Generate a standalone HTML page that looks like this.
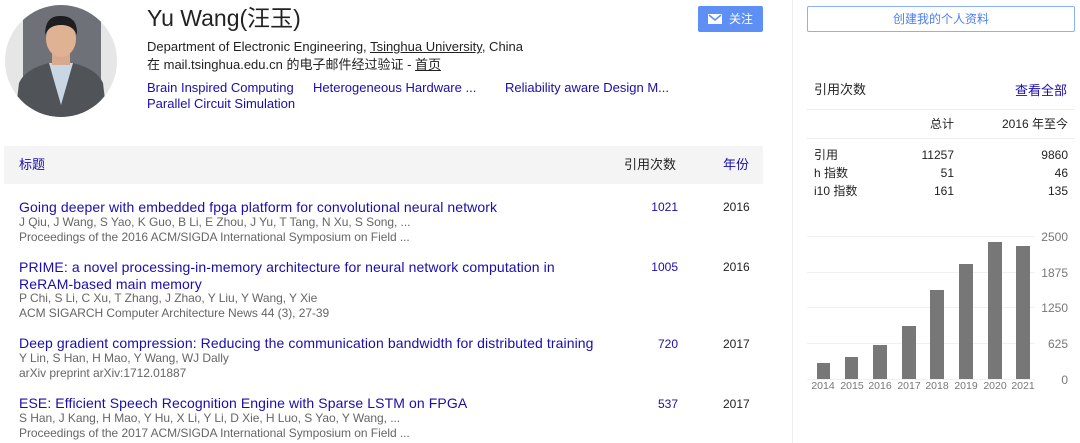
<!DOCTYPE html>
<html><head><meta charset="utf-8"><style>
*{margin:0;padding:0;box-sizing:border-box}
body{width:1080px;height:443px;background:#fff;font-family:"Liberation Sans","Noto Sans CJK SC",sans-serif;position:relative;overflow:hidden;color:#222}
.a{position:absolute;white-space:nowrap;line-height:1}
.t{font-size:14px;color:#1a0dab;letter-spacing:0.1px}
.au{font-size:12px;color:#666;letter-spacing:-0.05px}
.v{font-size:12px;color:#666;letter-spacing:-0.05px}
.c{font-size:12px;color:#1a0dab;text-align:right;width:60px}
.y{font-size:12px;color:#222}
.r{text-align:right}
</style></head><body>
<svg class="a" style="left:5px;top:5px" width="112" height="112" viewBox="0 0 112 112">
<defs><clipPath id="cp"><circle cx="56" cy="56" r="56"/></clipPath></defs>
<g clip-path="url(#cp)">
<rect width="112" height="112" fill="#e6e6e6"/>
<rect x="18" y="0" width="78" height="112" fill="#6e7178"/>
<path d="M10 112 L14 78 Q20 64 44 58 L68 58 Q92 64 98 78 L102 112Z" fill="#505358"/>
<path d="M44 58 L56 100 L68 58Z" fill="#c9d6e4"/>
<rect x="47" y="44" width="18" height="16" fill="#d8a98c"/>
<ellipse cx="56" cy="34" rx="15" ry="18" fill="#e0b294"/>
<path d="M40 30 Q40 10 56 11 Q73 11 72 30 Q68 20 56 20 Q44 20 40 30Z" fill="#1e1e20"/>
</g></svg>
<div class="a" style="left:147px;top:7px;font-size:23px;color:#222">Yu Wang(汪玉)</div>
<div class="a" style="left:147px;top:40px;font-size:13px;color:#222">Department of Electronic Engineering, <u>Tsinghua University</u>, China</div>
<div class="a" style="left:147px;top:58px;font-size:13px;color:#222">在 mail.tsinghua.edu.cn 的电子邮件经过验证 - <u>首页</u></div>
<div class="a" style="left:147px;top:81px;font-size:13px;color:#1a0dab">Brain Inspired Computing</div>
<div class="a" style="left:313px;top:81px;font-size:13px;color:#1a0dab">Heterogeneous Hardware ...</div>
<div class="a" style="left:505px;top:81px;font-size:13px;color:#1a0dab">Reliability aware Design M...</div>
<div class="a" style="left:147px;top:97px;font-size:13px;color:#1a0dab">Parallel Circuit Simulation</div>
<div class="a" style="left:698px;top:6px;width:65px;height:26px;background:#5d8ff5;border-radius:2px"></div>
<svg class="a" style="left:708px;top:14px" width="14" height="10" viewBox="0 0 14 10"><rect width="14" height="10" fill="#fff"/><path d="M1 1 L7 6 L13 1" stroke="#5d8ff5" stroke-width="1.5" fill="none"/></svg>
<div class="a" style="left:729px;top:13px;font-size:12px;color:#fff">关注</div>
<div class="a" style="left:4px;top:146px;width:759px;height:38px;background:#f4f4f4"></div>
<div class="a" style="left:19px;top:158px;font-size:13px;color:#1a0dab">标题</div>
<div class="a" style="left:624px;top:158px;font-size:13px;color:#222">引用次数</div>
<div class="a" style="left:723px;top:158px;font-size:13px;color:#1a0dab">年份</div>

<div class="a t" style="left:19px;top:200px">Going deeper with embedded fpga platform for convolutional neural network</div>
<div class="a au" style="left:19px;top:216px">J Qiu, J Wang, S Yao, K Guo, B Li, E Zhou, J Yu, T Tang, N Xu, S Song, ...</div>
<div class="a v" style="left:19px;top:231px">Proceedings of the 2016 ACM/SIGDA International Symposium on Field ...</div>
<div class="a c" style="left:618px;top:201px">1021</div><div class="a y" style="left:723px;top:201px">2016</div>

<div class="a t" style="left:19px;top:260px">PRIME: a novel processing-in-memory architecture for neural network computation in</div>
<div class="a t" style="left:19px;top:277px">ReRAM-based main memory</div>
<div class="a au" style="left:19px;top:292px">P Chi, S Li, C Xu, T Zhang, J Zhao, Y Liu, Y Wang, Y Xie</div>
<div class="a v" style="left:19px;top:307px">ACM SIGARCH Computer Architecture News 44 (3), 27-39</div>
<div class="a c" style="left:618px;top:261px">1005</div><div class="a y" style="left:723px;top:261px">2016</div>

<div class="a t" style="left:19px;top:336px">Deep gradient compression: Reducing the communication bandwidth for distributed training</div>
<div class="a au" style="left:19px;top:352px">Y Lin, S Han, H Mao, Y Wang, WJ Dally</div>
<div class="a v" style="left:19px;top:367px">arXiv preprint arXiv:1712.01887</div>
<div class="a c" style="left:618px;top:338px">720</div><div class="a y" style="left:723px;top:338px">2017</div>

<div class="a t" style="left:19px;top:396px">ESE: Efficient Speech Recognition Engine with Sparse LSTM on FPGA</div>
<div class="a au" style="left:19px;top:412px">S Han, J Kang, H Mao, Y Hu, X Li, Y Li, D Xie, H Luo, S Yao, Y Wang, ...</div>
<div class="a v" style="left:19px;top:427px">Proceedings of the 2017 ACM/SIGDA International Symposium on Field ...</div>
<div class="a c" style="left:618px;top:398px">537</div><div class="a y" style="left:723px;top:398px">2017</div>

<div class="a" style="left:792px;top:0;width:1px;height:443px;background:#eee"></div>
<div class="a" style="left:807px;top:6px;width:268px;height:26px;border:1px solid #8ab0f7;border-radius:2px;font-size:12px;color:#4a7ff0;text-align:center;line-height:24px">创建我的个人资料</div>
<div class="a" style="left:814px;top:83px;font-size:13px;color:#222">引用次数</div>
<div class="a" style="left:1015px;top:84px;font-size:13px;color:#1a0dab">查看全部</div>
<div class="a" style="left:807px;top:109px;width:268px;height:1px;background:#eee"></div>
<div class="a" style="left:930px;top:118px;font-size:12px">总计</div>
<div class="a r" style="left:980px;top:118px;width:88px;font-size:12px">2016 年至今</div>
<div class="a" style="left:807px;top:138px;width:268px;height:1px;background:#eee"></div>
<div class="a" style="left:814px;top:149px;font-size:12px">引用</div>
<div class="a r" style="left:900px;top:149px;width:54px;font-size:12px">11257</div>
<div class="a r" style="left:1010px;top:149px;width:58px;font-size:12px">9860</div>
<div class="a" style="left:814px;top:167px;font-size:12px">h 指数</div>
<div class="a r" style="left:900px;top:167px;width:54px;font-size:12px">51</div>
<div class="a r" style="left:1010px;top:167px;width:58px;font-size:12px">46</div>
<div class="a" style="left:814px;top:185px;font-size:12px">i10 指数</div>
<div class="a r" style="left:900px;top:185px;width:54px;font-size:12px">161</div>
<div class="a r" style="left:1010px;top:185px;width:58px;font-size:12px">135</div>
<svg class="a" style="left:800px;top:225px" width="280" height="170" viewBox="800 225 280 170">
<g stroke="#f0f0f0" stroke-width="1">
<line x1="807" y1="236.5" x2="1035" y2="236.5"/><line x1="807" y1="272.5" x2="1035" y2="272.5"/>
<line x1="807" y1="307.5" x2="1035" y2="307.5"/><line x1="807" y1="343.5" x2="1035" y2="343.5"/>
<line x1="807" y1="379.5" x2="1035" y2="379.5"/></g>
<g fill="#777">
<rect x="817" y="363" width="13" height="16"/><rect x="845" y="357" width="13" height="22"/>
<rect x="873" y="345" width="14" height="34"/><rect x="902" y="326" width="14" height="53"/>
<rect x="930" y="290" width="14" height="89"/><rect x="959" y="264" width="14" height="115"/>
<rect x="988" y="242" width="14" height="137"/><rect x="1016" y="246" width="14" height="133"/></g>
<g font-family="Liberation Sans" font-size="12" fill="#777" text-anchor="end">
<text x="1068" y="241">2500</text><text x="1068" y="277">1875</text><text x="1068" y="312">1250</text>
<text x="1068" y="348">625</text><text x="1068" y="384">0</text></g>
<g font-family="Liberation Sans" font-size="10.5" fill="#777" text-anchor="middle">
<text x="823" y="389">2014</text><text x="852" y="389">2015</text><text x="880" y="389">2016</text><text x="909" y="389">2017</text>
<text x="937" y="389">2018</text><text x="966" y="389">2019</text><text x="995" y="389">2020</text><text x="1023" y="389">2021</text></g>
</svg>
</body></html>
